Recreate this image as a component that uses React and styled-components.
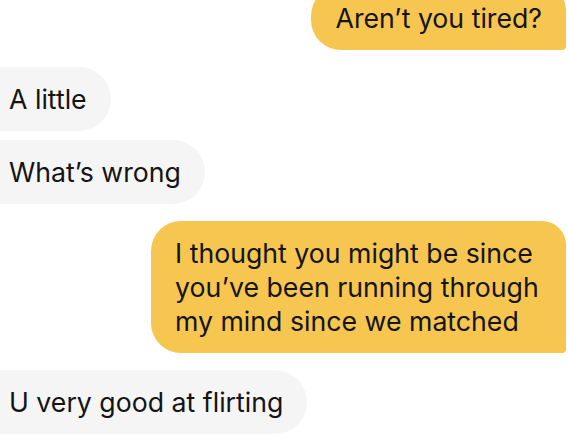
import { createGlobalStyle, styled } from "styled-components"

const messages = [
    { id: 1, mine: true, text: "Aren’t you tired?" },
    { id: 2, mine: false, text: "A little" },
    { id: 3, mine: false, text: "What’s wrong" },
    { id: 4, mine: true, text: "I thought you might be since you’ve been running through my mind since we matched" },
    { id: 5, mine: false, text: "U very good at flirting" },
]

export default function App() {
    return (
        <>
            <GlobalStyle />
            <Thread>
                {messages.map((m, i) => {
                    const grouped = i > 0 && messages[i - 1].mine === m.mine
                    return (
                        <Row key={m.id} $mine={m.mine} $grouped={grouped} $first={i === 0}>
                            <Bubble $mine={m.mine}>{m.text}</Bubble>
                        </Row>
                    )
                })}
            </Thread>
        </>
    )
}

const GlobalStyle = createGlobalStyle`
    html, body {
        margin: 0;
        background: #ffffff;
        overflow: hidden;
    }
    body {
        font-family: "Inter", "Noto Sans", sans-serif;
    }
`

const Thread = styled.div`
    width: 569px;
    height: 436px;
    display: flex;
    flex-direction: column;
    overflow: hidden;
`

const Row = styled.div`
    display: flex;
    justify-content: ${p => p.$mine ? "flex-end" : "flex-start"};
    margin-top: ${p => p.$first ? "-14px" : p.$grouped ? "9px" : "17px"};
    padding-right: ${p => p.$mine ? "3px" : "0"};
    margin-left: ${p => p.$mine ? "0" : "-15px"};
`

const Bubble = styled.div`
    max-width: 367px;
    padding: 15px 24px;
    font-size: 26.7px;
    line-height: 34px;
    color: #141414;
    background: ${p => p.$mine ? "#f6c650" : "#f5f5f5"};
    border-radius: ${p => p.$mine ? "30px 24px 4px 30px" : "4px 32px 32px 4px"};
`
